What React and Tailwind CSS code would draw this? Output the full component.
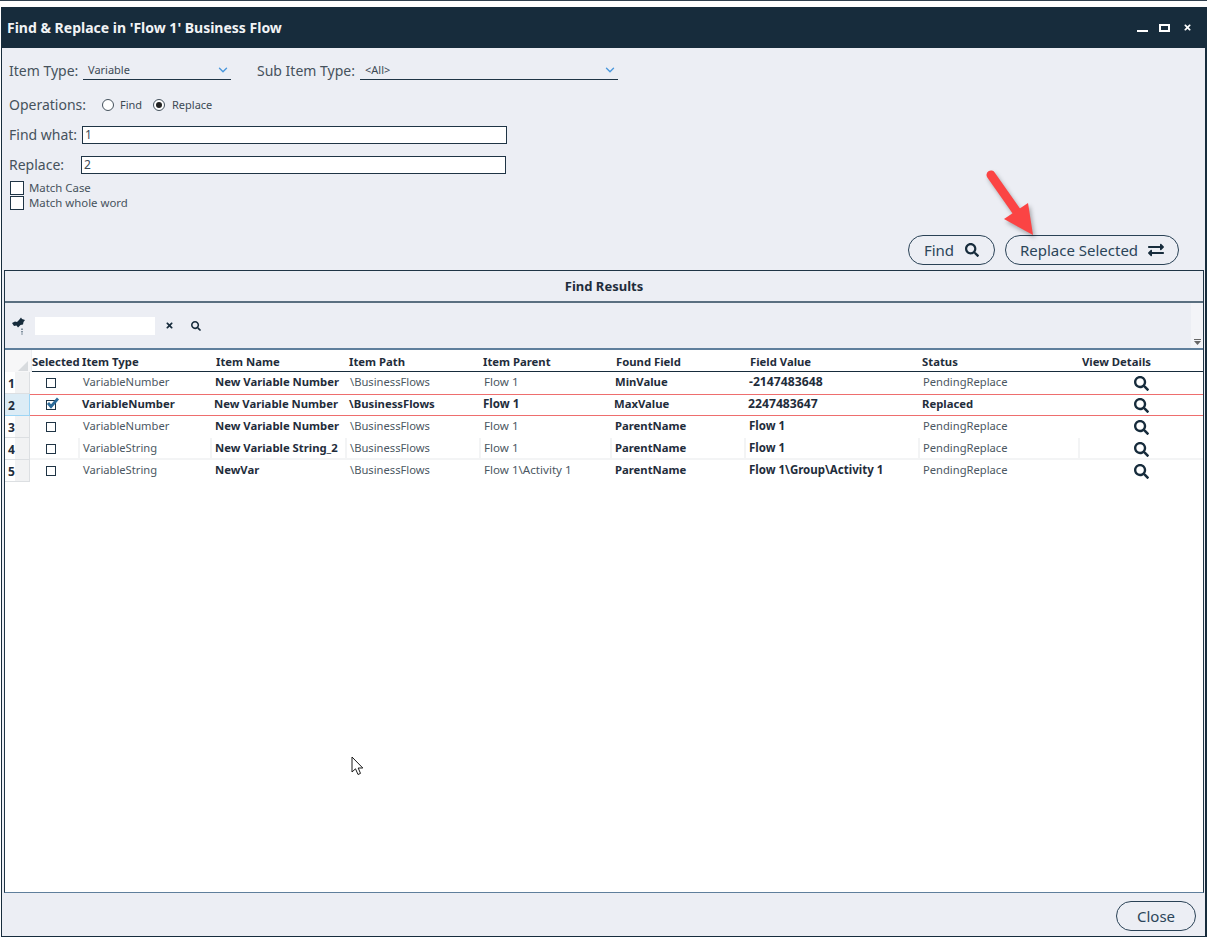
import React from "react";
import { FaSearch, FaExchangeAlt, FaTimes } from "react-icons/fa";
import { ChevronDown } from "lucide-react";

const headGrid = "grid grid-cols-[48px_132px_135px_134px_131px_134px_174px_160px_123px]";
const rowGrid = "grid grid-cols-[50px_132px_135px_134px_131px_134px_174px_160px_123px]";

const rows = [
  { n: 1, type: "VariableNumber", name: "New Variable Number", path: "\\BusinessFlows", parent: "Flow 1", field: "MinValue", value: "-2147483648", numeric: true, status: "PendingReplace" },
  { n: 2, sel: true, type: "VariableNumber", name: "New Variable Number", path: "\\BusinessFlows", parent: "Flow 1", field: "MaxValue", value: "2247483647", numeric: true, status: "Replaced" },
  { n: 3, type: "VariableNumber", name: "New Variable Number", path: "\\BusinessFlows", parent: "Flow 1", field: "ParentName", value: "Flow 1", status: "PendingReplace" },
  { n: 4, soft: true, type: "VariableString", name: "New Variable String_2", path: "\\BusinessFlows", parent: "Flow 1", field: "ParentName", value: "Flow 1", status: "PendingReplace" },
  { n: 5, type: "VariableString", name: "NewVar", path: "\\BusinessFlows", parent: "Flow 1\\Activity 1", field: "ParentName", value: "Flow 1\\Group\\Activity 1", status: "PendingReplace" },
];

const heads = [
  ["Selected", "pl-0"],
  ["Item Type", "pl-[2px]"],
  ["Item Name", "pl-[4px]"],
  ["Item Path", "pl-[2px]"],
  ["Item Parent", "pl-[2px]"],
  ["Found Field", "pl-[4px]"],
  ["Field Value", "pl-[4px]"],
  ["Status", "pl-[2px]"],
  ["View Details", "pl-[2px]"],
];

function Cell({ children, strong, sel, soft, size }) {
  const weight = strong || sel ? "font-bold text-[#1f2d3b]" : "text-[#4b5762]";
  const fontSize = size || (strong || sel ? "text-[11.3px]" : "text-[11.2px]");
  return (
    <div
      className={`flex h-full items-center whitespace-nowrap pb-[2px] ${sel ? "pl-[2px]" : "pl-[3px]"} ${fontSize} ${weight} ${
        soft ? "shadow-[inset_-2px_0_0_#f3f4f5]" : ""
      }`}
    >
      {children}
    </div>
  );
}

function Row({ r }) {
  const p = { sel: r.sel, soft: r.soft };
  return (
    <div className="flex h-[22px]">
      <div
        className={`flex w-[25px] shrink-0 items-center border-b border-r pt-[2px] text-[12px] font-bold text-[#1f2d3b] ${
          r.sel
            ? "border-[#9dd5f5] bg-[#dcecf6]"
            : "border-[#dcdfe2] bg-[linear-gradient(to_right,#ffffff_40%,#f1f2f3_40%)]"
        }`}
      >
        <span className="pl-[3px]">{r.n}</span>
      </div>
      <div
        className={`${rowGrid} h-full flex-1 ${
          r.sel ? "border-y border-[#ee6e6e]" : r.soft ? "shadow-[inset_0_-2px_0_#f3f4f5]" : ""
        }`}
      >
        <div className={`flex h-full items-center pl-[16px] ${r.soft ? "shadow-[inset_-2px_0_0_#f3f4f5]" : ""}`}>
          {r.sel ? (
            <span className="relative block h-[10px] w-[10px] border border-[#1f3445]">
              <svg viewBox="0 0 14 12" className="absolute left-[-1px] top-[-4px] h-[12px] w-[14px]">
                <path d="M2 6l3 3.5L12 1.5" fill="none" stroke="#2b6a99" strokeWidth="2.8" />
              </svg>
            </span>
          ) : (
            <span className="block h-[10px] w-[10px] border border-[#1f3445] bg-white" />
          )}
        </div>
        <Cell {...p}>{r.type}</Cell>
        <Cell {...p} strong>{r.name}</Cell>
        <Cell {...p}>{r.path}</Cell>
        <Cell {...p} size="text-[11.6px]">{r.parent}</Cell>
        <Cell {...p} strong>{r.field}</Cell>
        <Cell {...p} strong size={r.numeric ? "text-[12.2px]" : "text-[11.5px]"}>{r.value}</Cell>
        <Cell {...p}>{r.status}</Cell>
        <div className="flex h-full items-center justify-center">
          <FaSearch className="text-[15px] text-[#172c3c]" />
        </div>
      </div>
    </div>
  );
}

function Pill({ className, children }) {
  return (
    <button className={`flex h-[30px] items-center justify-center rounded-full border border-[#2a4256] text-[15px] text-[#2b4559] ${className}`}>
      {children}
    </button>
  );
}

function Select({ label, value, labelClass, widthClass }) {
  return (
    <>
      <span className={`text-[14px] leading-[18px] text-[#46525c] ${labelClass}`}>{label}</span>
      <div className={`relative flex h-[18px] items-center border-b border-[#1f3445] pl-[5px] text-[11px] text-[#3d4a55] ${widthClass}`}>
        {value}
        <ChevronDown className="absolute right-[1px] top-[1px] h-[14px] w-[14px] text-[#4a97dc]" strokeWidth={2.4} />
      </div>
    </>
  );
}

function Check({ label }) {
  return (
    <div className="flex h-[14px] items-center">
      <span className="ml-[8px] block h-[14px] w-[14px] border border-[#1f3445] bg-white" />
      <span className="ml-[5px] text-[11.4px] text-[#46525c]">{label}</span>
    </div>
  );
}

export default function App() {
  return (
    <div className="relative flex h-[938px] w-[1208px] flex-col overflow-hidden bg-white font-['Noto_Sans',sans-serif]">
      <div className="h-[7px] shrink-0">
        <div className="h-px w-[1207px] bg-[#30404e]" />
      </div>

      <div className="ml-px flex h-[930px] w-[1206px] flex-col bg-[#172c3c] pb-px pl-px pr-[2px]">
        <div className="flex h-[41px] shrink-0 items-center justify-between pl-[5px] pr-[13px]">
          <span className="text-[14px] font-bold text-[#f1f3f5]">Find &amp; Replace in 'Flow 1' Business Flow</span>
          <div className="flex items-center">
            <span className="mt-[7px] block h-[2px] w-[11px] bg-white" />
            <span className="ml-[11px] block h-[8px] w-[11px] border-2 border-white" />
            <FaTimes className="ml-[13px] text-[9px] text-white" />
          </div>
        </div>

        <div className="flex min-h-0 flex-1 flex-col bg-[#eceef4]">
          <div className="mt-[14px] flex h-[18px] items-center pl-[7px]">
            <Select label="Item Type:" value="Variable" labelClass="w-[74px]" widthClass="w-[148px]" />
            <span className="w-[26px]" />
            <Select label="Sub Item Type:" value="<All>" labelClass="w-[103px]" widthClass="w-[258px]" />
          </div>

          <div className="mt-[16px] flex h-[18px] items-center pl-[7px]">
            <span className="mt-[-2px] w-[93px] text-[14px] text-[#46525c]">Operations:</span>
            <span className="block h-[12px] w-[12px] rounded-full border border-[#44515c] bg-white" />
            <span className="ml-[6px] w-[33px] text-[11px] text-[#3d4a55]">Find</span>
            <span className="flex h-[12px] w-[12px] items-center justify-center rounded-full border border-[#44515c] bg-white">
              <span className="block h-[6px] w-[6px] rounded-full bg-[#222]" />
            </span>
            <span className="ml-[7px] text-[11px] text-[#3d4a55]">Replace</span>
          </div>

          <div className="mt-[12px] flex h-[18px] items-center pl-[7px]">
            <span className="mt-[-2px] w-[73px] text-[14px] text-[#46525c]">Find what:</span>
            <div className="flex h-[18px] w-[425px] items-center border border-[#1f3445] bg-white pl-[2px] text-[12px] text-[#3d4a55]">1</div>
          </div>

          <div className="mt-[12px] flex h-[18px] items-center pl-[7px]">
            <span className="mt-[-2px] w-[72px] text-[14px] text-[#46525c]">Replace:</span>
            <div className="flex h-[18px] w-[425px] items-center border border-[#1f3445] bg-white pl-[2px] text-[12px] text-[#3d4a55]">2</div>
          </div>

          <div className="mt-[7px]"><Check label="Match Case" /></div>
          <div className="mt-px"><Check label="Match whole word" /></div>

          <div className="mt-[25px] flex justify-end gap-[10px] pr-[26px]">
            <Pill className="w-[87px] gap-[11px]">
              Find <FaSearch className="text-[14px] text-[#172c3c]" />
            </Pill>
            <Pill className="w-[174px] gap-[10px]">
              Replace Selected <FaExchangeAlt className="text-[16px] text-[#172c3c]" />
            </Pill>
          </div>

          <div className="ml-[2px] mt-[5px] flex min-h-0 w-[1200px] flex-1 flex-col border border-[#1f3445] border-b-[#5f7f9c]">
            <div className="flex h-[32px] shrink-0 items-center justify-center border-b-2 border-[#5a6f80] pt-[2px] text-[13px] font-bold text-[#1f2d3b]">
              Find Results
            </div>
            <div className="relative flex h-[47px] shrink-0 items-center border-b-2 border-[#5f7f9c]">
              <svg viewBox="0 0 15 18" className="ml-[6px] h-[18px] w-[15px]">
                <path d="M1 6L4 4.500L6 5L8 3L10 .5L11 2L14 3L12.500 5L12 7.500L9.500 8L7 10.500L5.500 8.500L3 9Z" fill="#172c3c" />
                <path d="M11 11.500V17.500" stroke="#5b7080" strokeWidth="1.500" strokeDasharray="1.500 1" />
              </svg>
              <span className="ml-[9px] block h-[18px] w-[120px] bg-white" />
              <FaTimes className="ml-[10px] text-[9px] text-[#172c3c]" />
              <FaSearch className="ml-[17px] text-[10px] text-[#172c3c]" />
              <div className="absolute bottom-0 right-0 top-0 flex w-[12px] flex-col items-center justify-end bg-[#f3f4f8] pb-[3px]">
                <span className="block h-px w-[7px] bg-[#666]" />
                <svg viewBox="0 0 7 4" className="mt-px h-[4px] w-[7px]">
                  <path d="M0 0H7L3.500 4Z" fill="#666" />
                </svg>
              </div>
            </div>
            <div className="min-h-0 flex-1 bg-white">
              <div className="flex h-[22px]">
                <div className="relative w-[27px] shrink-0 border-r border-[#eceef0] bg-[#f7f7f8]">
                  <svg viewBox="0 0 10 10" className="absolute bottom-[1px] right-[3px] h-[10px] w-[10px]">
                    <path d="M10 0V10H0Z" fill="#d8dbde" />
                  </svg>
                </div>
                <div className={`${headGrid} flex-1 border-b border-[#172c3c]`}>
                  {heads.map(([h, pad]) => (
                    <div key={h} className={`flex items-center whitespace-nowrap pt-[3px] text-[11.3px] font-bold text-[#1f2d3b] ${pad}`}>
                      {h}
                    </div>
                  ))}
                </div>
              </div>
              {rows.map((r) => <Row key={r.n} r={r} />)}
            </div>
          </div>

          <div className="flex h-[43px] shrink-0 justify-end pr-[9px] pt-[8px]">
            <Pill className="w-[80px]">Close</Pill>
          </div>
        </div>
      </div>

      <svg viewBox="0 0 60 75" className="absolute left-[980px] top-[165px] h-[75px] w-[60px] drop-shadow-[2px_3px_2px_rgba(0,0,0,0.3)]">
        <path d="M11 10 L37 47" stroke="#fb4444" strokeWidth="9" strokeLinecap="round" fill="none" />
        <path d="M53 70 L24 54 L48 38 Z" fill="#fb4444" />
      </svg>

      <svg viewBox="0 0 13 20" className="absolute left-[351px] top-[756px] h-[20px] w-[13px]">
        <path d="M1 1V16L4.500 12.800L7 18.500L9.500 17.400L7.200 12H11.800Z" fill="white" stroke="#1a1a1a" strokeWidth="1" strokeLinejoin="round" />
      </svg>
    </div>
  );
}
